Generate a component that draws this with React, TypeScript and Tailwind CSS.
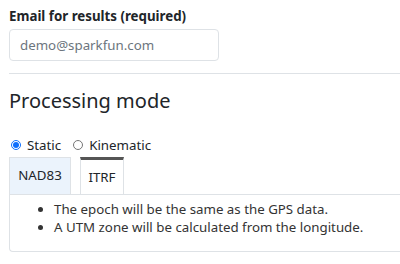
import { useState } from 'react';

export default function App() {
  const [mode, setMode] = useState('static');
  const [datum, setDatum] = useState('itrf');

  return (
    <div className="w-[400px] h-[264px] overflow-hidden bg-white text-[#212529] font-['Noto_Sans',sans-serif] pl-[9px] pt-[7px]">
      {/* Email */}
      <label className="block text-[13.3px] font-bold leading-[18px]">Email for results (required)</label>
      <input
        type="email"
        placeholder="demo@sparkfun.com"
        className="mt-[4px] block w-[210px] h-[32px] px-[10px] border border-[#dee2e6] rounded-[4px] text-[13.3px] placeholder-[#6c757d] focus:outline-none"
      />

      <hr className="mt-[12px] border-0 border-t border-[#dee2e6]" />

      {/* Processing mode */}
      <h2 className="mt-[14px] text-[20px] leading-[26px] font-normal">Processing mode</h2>

      <div className="mt-[23px] flex items-center gap-[12px] text-[13.3px] leading-[16px]">
        <label className="flex items-center gap-[6px] pl-[2px]">
          <input
            type="radio"
            checked={mode === 'static'}
            onChange={() => setMode('static')}
            className="w-[10px] h-[10px] m-0 accent-[#0d6efd]"
          />
          Static
        </label>
        <label className="flex items-center gap-[6px]">
          <input
            type="radio"
            checked={mode === 'kinematic'}
            onChange={() => setMode('kinematic')}
            className="w-[10px] h-[10px] m-0 accent-[#0d6efd]"
          />
          Kinematic
        </label>
      </div>

      {/* Tabs */}
      <div className="mt-[4px] flex items-end gap-[9px] text-[13.3px]">
        <button
          onClick={() => setDatum('nad83')}
          className={
            datum === 'nad83'
              ? 'w-[62px] h-[37px] bg-white border border-[#dee2e6] border-b-0 border-t-[3px] border-t-[#555]'
              : 'w-[62px] h-[37px] bg-[#ebf3fc] border border-[#dee2e6] border-b-0'
          }
        >
          NAD83
        </button>
        <button
          onClick={() => setDatum('itrf')}
          className={
            datum === 'itrf'
              ? 'w-[44px] h-[37px] bg-white border border-[#dee2e6] border-b-0 border-t-[3px] border-t-[#555] pt-[1px]'
              : 'w-[44px] h-[37px] bg-[#ebf3fc] border border-[#dee2e6] border-b-0'
          }
        >
          ITRF
        </button>
      </div>
      <div className="h-[58px] border border-[#dee2e6] border-r-0 rounded-bl-[4px] pt-[5px]">
        <ul className="list-disc pl-[44px] text-[13.3px] leading-[18px] text-[#333]">
          {datum === 'itrf' ? (
            <>
              <li>The epoch will be the same as the GPS data.</li>
              <li>A UTM zone will be calculated from the longitude.</li>
            </>
          ) : (
            <>
              <li>The epoch will be 2010.0.</li>
              <li>A state plane zone will be used.</li>
            </>
          )}
        </ul>
      </div>
    </div>
  );
}
